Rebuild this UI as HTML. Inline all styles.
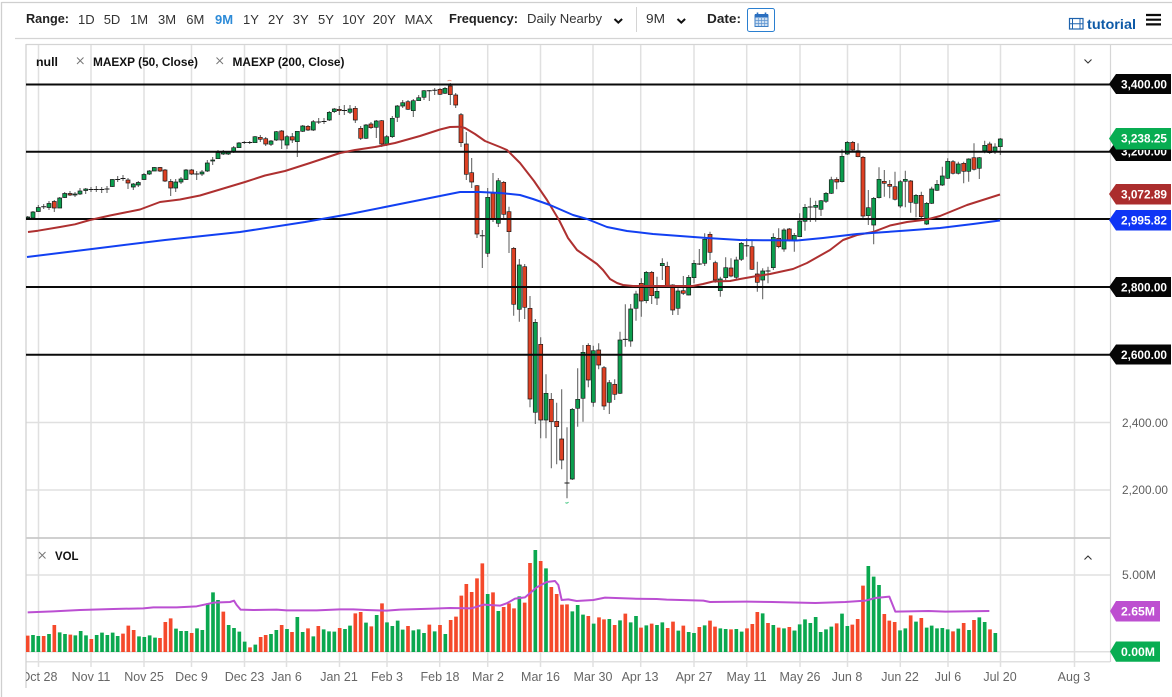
<!DOCTYPE html>
<html><head><meta charset="utf-8"><title>Chart</title>
<style>html,body{margin:0;padding:0;background:#fff;width:1172px;height:697px;overflow:hidden}svg{display:block}text{font-family:"Liberation Sans",sans-serif}</style></head>
<body>
<svg xmlns="http://www.w3.org/2000/svg" width="1172" height="697" viewBox="0 0 1172 697">
<defs><clipPath id="c"><rect x="26" y="44" width="1084" height="640"/></clipPath><clipPath id="x"><rect x="26" y="664" width="1100" height="30"/></clipPath><clipPath id="t"><rect x="1105" y="150" width="67" height="20"/></clipPath></defs>
<rect width="1172" height="697" fill="#fff"/>
<path d="M1.5 2.5H1172M1.5 2V697" stroke="#cfcfcf" stroke-width="1.3" fill="none"/>
<path d="M15 38.5H1172M26 44.5H1172" stroke="#d4d4d4" stroke-width="1.2"/>
<!-- toolbar -->
<g font-size="13" fill="#333">
<text x="26" y="23" font-weight="700" fill="#222" textLength="43" lengthAdjust="spacingAndGlyphs">Range:</text>
<g text-anchor="middle" font-size="13"><text x="86.3" y="24">1D</text><text x="112" y="24">5D</text><text x="139" y="24">1M</text><text x="167" y="24">3M</text><text x="195.3" y="24">6M</text><text x="224" y="24" fill="#2d8bd8" font-weight="700">9M</text><text x="251" y="24">1Y</text><text x="276" y="24">2Y</text><text x="300.7" y="24">3Y</text><text x="326" y="24">5Y</text><text x="353.7" y="24">10Y</text><text x="384.3" y="24">20Y</text><text x="418.7" y="24">MAX</text></g>
<text x="449" y="23" font-weight="700" fill="#222" textLength="69" lengthAdjust="spacingAndGlyphs">Frequency:</text>
<text x="527" y="23" textLength="75" lengthAdjust="spacingAndGlyphs">Daily Nearby</text>
<text x="646" y="23" textLength="19" lengthAdjust="spacingAndGlyphs">9M</text>
<text x="707" y="23" font-weight="700" fill="#222" textLength="34" lengthAdjust="spacingAndGlyphs">Date:</text>
</g>
<path d="M614.5 19l3.8 3.6 3.8-3.6M677.5 19l3.8 3.6 3.8-3.6" fill="none" stroke="#111" stroke-width="2"/>
<path d="M636.5 7V32" stroke="#d4d4d4"/>
<rect x="747.5" y="8.5" width="27" height="23" rx="2" fill="#fff" stroke="#2a7fd0"/>
<rect x="755" y="15" width="13" height="11.5" fill="#cfe0f2" stroke="#3f7fc4"/>
<rect x="755" y="14" width="13" height="3.5" fill="#2a6fc0"/>
<path d="M757.5 12.5V16M765.5 12.5V16" stroke="#2a6fc0" stroke-width="1.6"/>
<path d="M758.3 18v8M761.5 18v8M764.7 18v8M755 20.5h13M755 23.5h13" stroke="#5d93cf" stroke-width=".7"/>
<rect x="1069.5" y="18.5" width="13.5" height="10.5" fill="#fff" stroke="#1f63ad" stroke-width="1.2"/>
<path d="M1072.5 18.5V29M1080 18.5V29M1069.5 23.7H1072.5M1080 23.7H1083M1072.5 23.7H1080" stroke="#1f63ad" stroke-width="1"/>
<text x="1087" y="29" font-size="13.5" font-weight="700" fill="#0e5aa7" textLength="49" lengthAdjust="spacingAndGlyphs">tutorial</text>
<path d="M1146 15H1161M1146 19.7H1161M1146 24.4H1161" stroke="#0b0b0b" stroke-width="2.2"/>
<!-- grid -->
<g stroke="#e0e0e0" stroke-width="1.5" fill="none">
<path d="M38.5 45V667M91 45V667M144 45V667M191.5 45V667M244.5 45V667M286.5 45V667M339.5 45V667M387 45V667M439.7 45V667M487.7 45V667M540.5 45V667M593 45V667M640.7 45V667M694 45V667M746.7 45V667M800 45V667M847.5 45V667M900.3 45V667M948 45V667M1000.5 45V667M1074.5 45V667"/>
<path d="M26 422.5H1110M26 490H1110M26 575H1110M26 651.7H1110M26 661.7H1110"/>
</g>
<path d="M26 538H1110" stroke="#c9c9c9" stroke-width="1.8"/>
<path d="M26 44V688" stroke="#cfcfcf" stroke-width="1.2"/>
<path d="M1110.5 44V662" stroke="#d6d6d6" stroke-width="1.2"/>
<g clip-path="url(#c)">
<!-- wicks -->
<path fill="none" stroke="#5a5a5a" stroke-width="1" d="M27.7 216V219M33 211V219M38.3 205V212M43.7 204V209M49 201V210M54.3 200V212M59.7 197V208M64.7 192V198M70 191V196M75 192V197M80 188V195M85.7 188V194M91 187V192M96.3 186V192M101.7 187V193M107 186V193M112.3 179V187M117.7 176V182M123 175V181M128 178V189M133.3 183V190M138.3 181V187M144 173V180M149.3 170V175M154.3 167V171M160 167V172M165 169V182M170.7 179V196M175.7 179V192M181 177V184M186 169V180M191.7 169V175M196.7 171V180M202 170V176M207.3 160V172M212.7 157V165M218 150V159M223.3 150V155M228.3 151V155M233.7 146V153M239 142V148M244.3 141V144M249.7 141V144M255 136V143M260.3 135V142M265.7 137V146M271 140V146M276.3 131V141M281.7 130V149M287 135V149M292.3 133V143M297.3 131V157M302.7 125V132M308 125V131M313.3 120V131M318.7 118V124M324 118V124M329.3 111V121M334.3 108V113M339.3 106V115M344.3 105V115M350 105V114M355.3 106V123M360.7 126V140M366 124V139M371 122V129M376.3 120V138M381.7 120V147M386.7 135V146M392.3 116V138M397.3 105V122M402.7 100V108M408 100V110M413.3 99V117M418.7 95V101M424 90V100M429.3 90V101M434.7 88V95M440 88V95M445 87V94M450.3 83V105M455.7 93V108M461 113V147M466.3 132V180M471.7 158V188M477 185V238M482.3 230V268M487.7 188V257M493 173V222M498.3 178V227M503.7 181V218M509 206.7V253M513.7 247V315.7M519.3 259V321.7M524.7 264V319M530 296V407.3M535.3 319V424M540.7 337.3V438.3M546 374.3V438.3M551.3 393V468.3M556.7 402.7V464.3M561.7 389.3V469.3M567 427.3V498.3M572.3 408V480M577.7 368.3V426.7M583 345V421.7M588.3 343.3V387.3M593.3 345.7V406.7M598.7 343.3V369.3M604 366V410M609.3 380V414M614.7 379.3V400M620 331.7V394M625.3 304.3V346.7M630.7 304V346.7M636 290.7V320.7M641.3 278.3V316.7M646.3 271V303.3M651.7 271V304M657 276.7V305M662.3 258.3V280M667.3 261.7V287.7M672.7 284.3V315M678 288.3V315M683.3 276V295M688.7 275V295.5M694 260V283.3M699.3 249V265M704.7 233.3V266M710 231.7V260M715.3 260.7V282.7M720.3 276.7V296.7M725.7 257.3V280M731 258.3V277.3M736.3 256.7V280M741.3 242V261M746.7 238.3V256.7M752 240V270M757.3 261.7V291.7M762.7 268.3V299.3M768 266.7V283.3M773.3 233.3V270M778.7 228.3V248.3M784 228.3V251.7M789.3 228V241.5M794.3 233V251.7M799.7 213.3V237M805 204V230.7M810.3 197.7V222M815.7 200.7V221.7M821 200V216M826 192V203M831.3 176.7V194M836.7 177.3V189.3M842 149.3V182.5M847.3 141V155M852.7 141V151.7M858 143.3V157.3M863 156V219.3M868.3 190V225M873.7 197V244.3M879 167.3V198.5M884.3 170V196.7M889.7 180V198.3M895 171.7V200.5M900.3 180V208M905.3 170.7V207.3M910.7 180V212.7M916 194V217.3M921.3 191.7V220.7M926.7 202V225M931.7 186.7V204M937 180V191M942.3 166.7V186M947.7 158.3V179M953 160V174.5M958.3 161.7V174.5M963.7 161.7V183.3M968.7 158.3V181.7M974 143.3V170.5M979.3 157V179M984.7 140.7V153.3M989.7 141.7V154M995 143.3V154M1000.3 138V155"/>
<!-- green bodies -->
<path fill="#0b9e4e" stroke="#1c1c1c" stroke-width=".7" d="M25.7 217h4V218h-4zM31 212h4V218h-4zM36.3 207.5h4V211.5h-4zM47 203.5h4V207.5h-4zM57.7 198h4V208h-4zM62.7 193.5h4V197.5h-4zM73 194h4V195h-4zM78 191h4V194h-4zM83.7 189h4V190.5h-4zM110.3 179.5h4V186.5h-4zM131.3 184h4V187h-4zM136.3 182.5h4V185h-4zM142 174.5h4V179.5h-4zM147.3 171h4V174h-4zM152.3 167.5h4V171h-4zM173.7 182h4V188h-4zM179 179h4V182h-4zM184 170h4V179.5h-4zM200 172h4V174h-4zM205.3 163h4V171h-4zM210.7 160h4V161h-4zM216 152.7h4V158.7h-4zM221.3 152h4V154h-4zM226.3 152.3h4V154h-4zM231.7 147.7h4V152h-4zM237 143h4V147.7h-4zM253 136.7h4V142.7h-4zM269 141h4V144.3h-4zM274.3 131.7h4V140h-4zM285 136.7h4V145h-4zM295.3 131.3h4V141.7h-4zM300.7 126h4V131.3h-4zM311.3 121.7h4V130h-4zM327.3 112.3h4V120h-4zM332.3 109h4V111.7h-4zM348 109h4V112.3h-4zM364 125h4V138.3h-4zM374.3 121h4V127.3h-4zM384.7 136.7h4V144h-4zM390.3 118.3h4V136.7h-4zM395.3 106h4V117.3h-4zM400.7 102.7h4V106h-4zM411.3 100.7h4V110.7h-4zM416.7 97.7h4V100.7h-4zM422 90.7h4V97.3h-4zM443 88.3h4V93.3h-4zM485.7 197.3h4V253.3h-4zM496.3 180.7h4V223.3h-4zM517.3 265h4V309.3h-4zM533.3 322.3h4V412.3h-4zM544 393.3h4V420h-4zM570.3 409.3h4V479h-4zM575.7 399.3h4V408.3h-4zM581 352.3h4V398.3h-4zM591.3 350.7h4V402.3h-4zM607.3 382.7h4V402.3h-4zM618 340h4V393.3h-4zM628.7 309h4V341h-4zM634 294h4V308.3h-4zM644.3 272.3h4V300.7h-4zM655 291.3h4V298h-4zM660.3 263.3h4V265.7h-4zM676 291h4V308.3h-4zM686.7 277.3h4V295h-4zM692 263.3h4V277.7h-4zM702.7 239.3h4V263.3h-4zM718.3 279h4V290.7h-4zM723.7 267.7h4V277.7h-4zM734.3 260h4V277.3h-4zM739.3 243.3h4V259.3h-4zM760.7 271h4V280h-4zM771.3 237.3h4V267.7h-4zM782 230h4V249h-4zM792.3 235.3h4V240.7h-4zM797.7 221h4V236.7h-4zM803 207.3h4V221.3h-4zM813.7 205.3h4V207.3h-4zM819 200.7h4V209.3h-4zM824 193.3h4V201.3h-4zM829.3 179.7h4V193.3h-4zM840 156.3h4V181.7h-4zM845.3 142.3h4V154h-4zM866.3 207.7h4V215.7h-4zM871.7 198.3h4V225h-4zM877 179.3h4V197.7h-4zM898.3 181.7h4V206h-4zM903.3 179.3h4V181.3h-4zM914 195.3h4V203.3h-4zM924.7 203.3h4V224h-4zM929.7 189h4V203.3h-4zM935 184.3h4V190.3h-4zM940.3 176h4V185h-4zM945.7 161.3h4V178.3h-4zM956.3 164h4V173.3h-4zM966.7 159h4V171.3h-4zM977.3 157.7h4V168.3h-4zM982.7 145.3h4V150.7h-4zM993 147h4V151.7h-4zM998.3 139h4V146.7h-4z"/>
<!-- red bodies -->
<path fill="#de4023" stroke="#1c1c1c" stroke-width=".7" d="M52.3 201.5h4V208h-4zM68 193.5h4V195h-4zM126 180h4V183h-4zM158 167.5h4V171h-4zM163 170h4V181h-4zM168.7 181.5h4V188h-4zM189.7 170h4V174h-4zM258.3 137.3h4V139.3h-4zM263.7 138.7h4V144h-4zM279.7 131h4V140h-4zM290.3 136.7h4V140h-4zM306 126.3h4V130h-4zM337.3 109.3h4V110.7h-4zM353.3 108.3h4V120h-4zM358.7 128.3h4V138.3h-4zM369 124h4V127.7h-4zM379.7 120.7h4V144h-4zM406 101.7h4V109.3h-4zM438 89.3h4V94.3h-4zM448.3 86h4V94.7h-4zM453.7 95h4V105h-4zM459 114.7h4V142.7h-4zM464.3 144h4V174.3h-4zM469.7 172.7h4V182h-4zM475 185.7h4V234h-4zM491 193.3h4V219h-4zM501.7 182.3h4V214.3h-4zM507 211.7h4V231.7h-4zM511.7 248.3h4V304.3h-4zM522.7 266.7h4V307.3h-4zM528 308.3h4V399h-4zM538.7 344.3h4V420h-4zM549.3 399.3h4V421.7h-4zM554.7 421.3h4V426.7h-4zM559.7 439h4V460h-4zM586.3 345.3h4V380h-4zM596.7 350h4V365h-4zM602 367.7h4V406h-4zM612.7 384.3h4V394.3h-4zM639.3 283.3h4V301h-4zM649.7 272.3h4V295.7h-4zM665.3 266.3h4V285.7h-4zM670.7 285h4V310h-4zM681.3 290.7h4V293.3h-4zM708 234.3h4V252.3h-4zM713.3 262.7h4V280h-4zM729 268h4V276h-4zM750 246.7h4V269.3h-4zM755.3 274h4V282.3h-4zM776.7 238.3h4V246.7h-4zM787.3 229h4V240.7h-4zM834.7 179.3h4V182h-4zM850.7 142.3h4V150h-4zM856 150.7h4V156.7h-4zM861 157.3h4V216h-4zM882.3 181.3h4V183.3h-4zM887.7 184.3h4V186.3h-4zM893 186.7h4V199.3h-4zM908.7 181h4V202.3h-4zM919.3 195.3h4V216.7h-4zM951 161.7h4V173.3h-4zM961.7 163.3h4V171.3h-4zM972 157.7h4V169.3h-4zM987.7 144h4V152.7h-4z"/>
<!-- dojis -->
<path fill="none" stroke="#1a1a1a" stroke-width="1" d="M41.2 206.8h5M88.5 189.5h5M93.8 189.5h5M99.2 189.5h5M104.5 189h5M115.2 179.5h5M120.5 178.5h5M194.2 174h5M241.8 142.5h5M247.2 142.5h5M316.2 122h5M321.5 121.5h5M342 110.5h5M426.8 90.7h5M432.2 90.3h5M479.8 235.7h5M564.5 483h5M622.8 339.4h5M696.8 264h5M744.2 245.7h5M765.5 271h5M807.8 207h5"/>
<path d="M447.5 81q2-1.2 4 0" fill="none" stroke="#ee9a88"/>
<path d="M565.5 502.5q1.5 1.5 3-.5" fill="none" stroke="#3cc47c"/>
<!-- black levels -->
<path d="M26 84.5H1110M26 151.7H1110M26 219H1110M26 287H1110M26 354.7H1110" stroke="#0a0a0a" stroke-width="2"/>
<!-- moving averages -->
<polyline fill="none" stroke="#ae3030" stroke-width="2" stroke-linejoin="round" points="28,232 38,230.7 60,227 75,224.3 90,220 110,215.5 125,212.5 140,209.5 160,202 180,199.5 200,195.5 220,189.5 245,182 265,175.5 285,171 310,163 340,153 355,150 375,147 395,143 420,136 440,129.5 450,127 460,126.7 465,128 475,134 485,141 500,147 507,150 520,163 534,181 547,200 559,220 568,238 577,250 587,257 597,264 603,270 610,279 617,283 623,285 633,286 653,286 673,286 693,286 703,284 713,281.5 730,281 740,279 757,276 770,274 793,269 807,263 830,250 843,240 857,235 873,232 890,225.5 907,222 927,219.5 940,216 967,205 1000,194.5"/>
<polyline fill="none" stroke="#1240f2" stroke-width="2" stroke-linejoin="round" points="27,257 100,248 165,240 240,232 305,222 350,214 400,204 440,196 460,192 480,192 500,193 520,195 533,199 550,205 573,215 587,219 607,227 627,231 653,234 680,236 707,238 740,240 773,240.3 797,240.5 823,238 857,234 907,230.5 940,228 973,224 1000,220.5"/>
<!-- volume -->
<g fill="none" stroke-width="11">
<g transform="translate(0,530) scale(.33333)">
<path stroke="#0aa84f" d="M99 315V366M115 318V366M147 312V366M179 307V366M195 312V366M226 316V366M242 303V366M258 316V366M290 315V366M306 308V366M322 315V366M338 308V366M353 318V366M417 319V366M433 321V366M449 316V366M465 323V366M528 296V366M543 303V366M559 303V366M591 295V366M607 300V366M623 220V366M639 187V366M654 210V366M686 285V366M702 294V366M718 305V366M734 335V366M766 344V366M813 312V366M829 300V366M861 297V366M892 261V366M908 306V366M940 319V366M971 298V366M987 304V366M1003 305V366M1035 297V366M1050 287V366M1098 278V366M1130 255V366M1161 277V366M1177 288V366M1193 272V366"/>
<path stroke="#f5492b" d="M83 317V366M131 318V366M163 285V366M211 314V366M274 327V366M369 311V366M385 287V366M401 300V366M480 324V366M496 276V366M512 265V366M575 309V366M670 245V366M750 352V366M782 321V366M797 315V366M845 285V366M876 306V366M924 295V366M955 288V366M1019 294V366M1066 250V366M1082 246V366M1114 289V366M1146 220V366"/>
<polyline stroke="#bb4fd2" stroke-width="6" stroke-linejoin="round" points="83,247 160,244 240,240 340,237 430,235 460,232 530,232 590,229 640,218 690,216 702,212 710,225 722,239 760,240 830,239 860,241 950,241 1020,238 1060,238 1100,240 1160,242 1200,239"/>
</g>
<g transform="translate(400,530) scale(.33333)">
<path stroke="#0aa84f" d="M8 299V366M40 301V366M56 298V366M72 309V366M104 304V366M136 312V366M263 192V366M295 243V366M358 199V366M406 60V366M438 115V366M517 244V366M533 225V366M549 254V366M581 281V366M628 267V366M660 271V366M692 277V366M708 258V366M739 286V366M771 285V366M787 277V366M835 302V366M866 306V366M882 309V366M914 286V366M961 295V366M977 297V366M1009 297V366M1025 305V366M1088 250V366M1120 285V366M1152 295V366M1184 302V366"/>
<path stroke="#f5492b" d="M24 288V366M88 284V366M120 285V366M152 270V366M168 260V366M184 197V366M199 162V366M215 186V366M231 145V366M247 100V366M279 187V366M311 231V366M327 220V366M342 235V366M374 218V366M390 99V366M422 93V366M454 171V366M470 192V366M486 224V366M501 223V366M565 258V366M597 262V366M612 268V366M644 285V366M676 251V366M723 293V366M755 281V366M803 294V366M819 275V366M850 287V366M898 291V366M930 272V366M945 290V366M993 298V366M1041 295V366M1057 282V366M1072 246V366M1104 279V366M1136 293V366M1168 291V366"/>
<polyline stroke="#bb4fd2" stroke-width="6" stroke-linejoin="round" points="0,239 100,236 150,234 215,235 250,224 300,227 320,220 345,206 375,202 410,172 440,156 465,153 475,165 485,210 505,208 530,213 580,210 615,203 700,206 770,207 800,209 910,212 930,216 1040,215 1120,216"/>
</g>
<g transform="translate(772,530) scale(.33333)">
<path stroke="#0aa84f" d="M67 302V366M83 283V366M99 268V366M115 279V366M131 261V366M146 306V366M162 298V366M178 290V366M210 251V366M226 288V366M289 108V366M305 140V366M321 165V366M384 301V366M400 295V366M432 275V366M464 293V366M479 287V366M495 295V366M511 294V366M527 298V366M559 296V366M591 300V366M622 262V366M638 276V366M670 309V366"/>
<path stroke="#f5492b" d="M194 280V366M241 284V366M257 267V366M273 167V366M337 252V366M352 272V366M368 276V366M416 256V366M448 264V366M543 304V366M575 279V366M606 270V366M654 298V366"/>
<polyline stroke="#bb4fd2" stroke-width="6" stroke-linejoin="round" points="0,216 130,219 220,216 280,212 310,204 352,200 370,245 470,243 520,245 652,243"/>
</g>
</g>
</g>
<!-- legends -->
<g font-size="12.3" font-weight="700" fill="#111">
<text x="36" y="66" textLength="22" lengthAdjust="spacingAndGlyphs">null</text>
<text x="93" y="66" textLength="105" lengthAdjust="spacingAndGlyphs">MAEXP (50, Close)</text>
<text x="232.5" y="66" textLength="112" lengthAdjust="spacingAndGlyphs">MAEXP (200, Close)</text>
<text x="55" y="560" textLength="23.5" lengthAdjust="spacingAndGlyphs">VOL</text>
</g>
<path d="M77 57.5l6.5 6.5M83.5 57.5l-6.5 6.5M216.5 57.5l6.5 6.5M223 57.5l-6.5 6.5M39 552l6.5 6.5M45.5 552l-6.5 6.5" stroke="#777" stroke-width="1" fill="none"/>
<path d="M1084.5 59.5l3.5 3.5 3.5-3.5M1084.5 559.5l3.5-3.5 3.5 3.5" stroke="#333" stroke-width="1.1" fill="none"/>
<!-- axis labels -->
<g font-size="12" fill="#5f5f5f">
<text x="1122" y="427" textLength="46" lengthAdjust="spacingAndGlyphs">2,400.00</text>
<text x="1122" y="494" textLength="46" lengthAdjust="spacingAndGlyphs">2,200.00</text>
<text x="1122" y="579" textLength="34" lengthAdjust="spacingAndGlyphs">5.00M</text>
</g>
<!-- tags -->
<path d="M1109 84l7-10H1171V94H1116z" fill="#050505"/>
<path d="M1109 151l7-10H1171V161H1116z" fill="#050505"/>
<path d="M1109 287l7-10H1171V297H1116z" fill="#050505"/>
<path d="M1109 354.5l7-10H1171V364.5H1116z" fill="#050505"/>
<g font-size="12.3" font-weight="700" fill="#fff">
<text x="1121" y="88.5" textLength="46" lengthAdjust="spacingAndGlyphs">3,400.00</text>
<text x="1121" y="155.5" textLength="46" lengthAdjust="spacingAndGlyphs" clip-path="url(#t)">3,200.00</text>
<text x="1121" y="291.5" textLength="46" lengthAdjust="spacingAndGlyphs">2,800.00</text>
<text x="1121" y="359" textLength="46" lengthAdjust="spacingAndGlyphs">2,600.00</text>
</g>
<path d="M1109 138.5l7-10.5H1171V149.5H1116z" fill="#08ad52"/>
<path d="M1109 194l7-10H1171V204.5H1116z" fill="#ab2d2d"/>
<path d="M1109 220l7-10H1171V230.5H1116z" fill="#0f35f5"/>
<path d="M1110 611l6-10H1160V621.5H1116z" fill="#bd4fd0"/>
<path d="M1110 651.5l6-10H1160V661.7H1116z" fill="#08ad52"/>
<g font-size="12.3" font-weight="700" fill="#fff">
<text x="1121" y="142.7" textLength="46" lengthAdjust="spacingAndGlyphs">3,238.25</text>
<text x="1121" y="198.5" textLength="46" lengthAdjust="spacingAndGlyphs">3,072.89</text>
<text x="1121" y="224.7" textLength="46" lengthAdjust="spacingAndGlyphs">2,995.82</text>
<text x="1121" y="615.7" textLength="34" lengthAdjust="spacingAndGlyphs">2.65M</text>
<text x="1121" y="656" textLength="34" lengthAdjust="spacingAndGlyphs">0.00M</text>
</g>
<g font-size="12.5" fill="#666" text-anchor="middle">
<g clip-path="url(#x)"><text x="39" y="681">Oct 28</text></g>
<text x="91" y="681">Nov 11</text><text x="144" y="681">Nov 25</text><text x="191.5" y="681">Dec 9</text><text x="244.5" y="681">Dec 23</text><text x="286.5" y="681">Jan 6</text><text x="339" y="681">Jan 21</text><text x="387" y="681">Feb 3</text><text x="440" y="681">Feb 18</text><text x="488" y="681">Mar 2</text><text x="540.5" y="681">Mar 16</text><text x="593" y="681">Mar 30</text><text x="640" y="681">Apr 13</text><text x="694" y="681">Apr 27</text><text x="746.5" y="681">May 11</text><text x="800" y="681">May 26</text><text x="847" y="681">Jun 8</text><text x="900" y="681">Jun 22</text><text x="948" y="681">Jul 6</text><text x="1000" y="681">Jul 20</text><text x="1074" y="681">Aug 3</text>
</g>
</svg>
</body></html>
